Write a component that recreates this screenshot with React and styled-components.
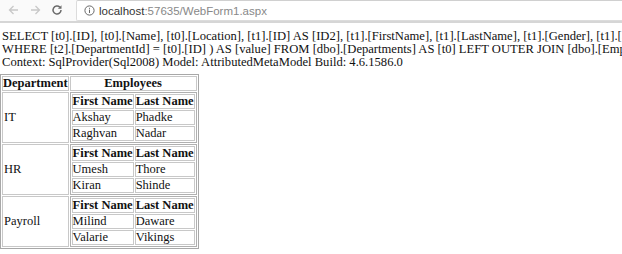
import React from "react"
import styled, { createGlobalStyle } from "styled-components"

const Global = createGlobalStyle`
  html, body { margin: 0; padding: 0; background: #fff; }
  body { font-family: "Liberation Serif", "Times New Roman", serif; font-size: 12.6px; color: #111; }
`

const Toolbar = styled.div`
  height: 21px;
  display: flex;
  align-items: flex-start;
  gap: 8px;
  padding-left: 6px;
  background: #fafafa;
  border-bottom: 2px solid #d6d6d6;
  overflow: hidden;
`

const NavButton = styled.span`
  width: 14px;
  height: 20px;
  display: flex;
  align-items: center;
  justify-content: center;
  color: ${p => (p.dim ? "#c8c8c8" : "#6a6a6a")};
`

const Omnibox = styled.div`
  flex: 1;
  height: 19px;
  margin-left: 4px;
  display: flex;
  align-items: center;
  gap: 4px;
  padding-left: 7px;
  background: #fff;
  border: 1px solid #dcdcdc;
  border-right: 0;
  border-top-color: #d0d0d0;
  border-radius: 2px 0 0 2px;
  font-family: "Liberation Sans", Arial, sans-serif;
  font-size: 11.5px;
  color: #888;
`

const Host = styled.span`
  color: #333;
`

const Content = styled.div`
  padding: 7px 0 0 2px;
  line-height: 13px;
`

const Line = styled.div`
  white-space: nowrap;
`

const Outer = styled.table`
  margin: 5px 0 0 -2px;
  border-collapse: separate;
  border-spacing: 1px;
  border: 1px solid #a8a8a8;
  font-size: 12.5px;
`

const HeadCell = styled.th`
  border: 1px solid #c8c8c8;
  padding: 0;
  font-weight: bold;
  line-height: 13px;
`

const DeptCell = styled.td`
  border: 1px solid #c8c8c8;
  padding: 0 1px;
  line-height: 13px;
`

const NestCell = styled.td`
  border: 0;
  padding: 0;
`

const Inner = styled.table`
  border-collapse: separate;
  border-spacing: 1px;
  border: 1px solid #b0b0b0;
  font-size: 12.5px;
`

const InnerCell = styled.td`
  border: 1px solid #c8c8c8;
  padding: 0;
  line-height: 13px;
  white-space: nowrap;
`

const InnerHead = styled.th`
  border: 1px solid #c8c8c8;
  padding: 0;
  line-height: 13px;
  white-space: nowrap;
`

const data = [
  { dept: "IT", people: [["Akshay", "Phadke"], ["Raghvan", "Nadar"]] },
  { dept: "HR", people: [["Umesh", "Thore"], ["Kiran", "Shinde"]] },
  { dept: "Payroll", people: [["Milind", "Daware"], ["Valarie", "Vikings"]] },
]

const Arrow = ({ flip }) => (
  <svg width="11" height="10" viewBox="0 0 11 10" style={{ transform: flip ? "scaleX(-1)" : "none" }}>
    <path d="M10 5H1.5M5.5 1L1.5 5l4 4" fill="none" stroke="currentColor" strokeWidth="1.3" />
  </svg>
)

export default function App() {
  return (
    <>
      <Global />
      <Toolbar>
        <NavButton dim><Arrow /></NavButton>
        <NavButton dim><Arrow flip /></NavButton>
        <NavButton>
          <svg width="12" height="12" viewBox="0 0 12 12">
            <path d="M10 6a4 4 0 1 1-1.2-2.85" fill="none" stroke="currentColor" strokeWidth="1.5" />
            <path d="M10.5 1.2v3.6H6.9z" fill="currentColor" />
          </svg>
        </NavButton>
        <Omnibox>
          <svg width="11" height="11" viewBox="0 0 11 11">
            <circle cx="5.5" cy="5.5" r="4.6" fill="none" stroke="#666" strokeWidth="1" />
            <rect x="5" y="4.6" width="1" height="3.4" fill="#666" />
            <rect x="5" y="2.8" width="1" height="1" fill="#666" />
          </svg>
          <span><Host>localhost</Host>:57635/WebForm1.aspx</span>
        </Omnibox>
      </Toolbar>
      <Content>
        <Line>SELECT [t0].[ID], [t0].[Name], [t0].[Location], [t1].[ID] AS [ID2], [t1].[FirstName], [t1].[LastName], [t1].[Gender], [t1].[Salary], [t1].[DepartmentId]</Line>
        <Line>WHERE [t2].[DepartmentId] = [t0].[ID] ) AS [value] FROM [dbo].[Departments] AS [t0] LEFT OUTER JOIN [dbo].[Employees] AS [t1]</Line>
        <Line>Context: SqlProvider(Sql2008) Model: AttributedMetaModel Build: 4.6.1586.0</Line>
        <Outer>
          <tbody>
            <tr>
              <HeadCell>Department</HeadCell>
              <HeadCell>Employees</HeadCell>
            </tr>
            {data.map(d => (
              <tr key={d.dept}>
                <DeptCell>{d.dept}</DeptCell>
                <NestCell>
                  <Inner>
                    <tbody>
                      <tr>
                        <InnerHead>First Name</InnerHead>
                        <InnerHead>Last Name</InnerHead>
                      </tr>
                      {d.people.map(([f, l]) => (
                        <tr key={f}>
                          <InnerCell>{f}</InnerCell>
                          <InnerCell>{l}</InnerCell>
                        </tr>
                      ))}
                    </tbody>
                  </Inner>
                </NestCell>
              </tr>
            ))}
          </tbody>
        </Outer>
      </Content>
    </>
  )
}
